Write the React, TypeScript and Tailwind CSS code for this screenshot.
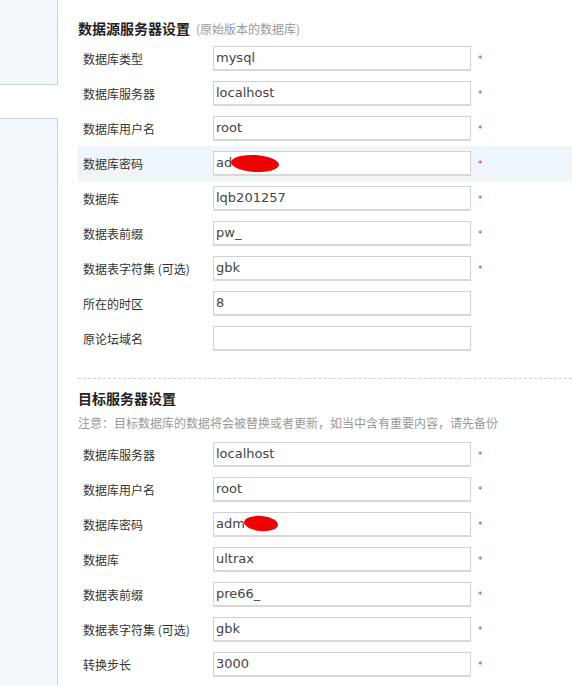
import React from "react";

type Row = {
  label: string;
  value: string;
  required?: boolean;
  hidden?: "short" | "long";
  active?: boolean;
};

const source: Row[] = [
  { label: "数据库类型", value: "mysql", required: true },
  { label: "数据库服务器", value: "localhost", required: true },
  { label: "数据库用户名", value: "root", required: true },
  { label: "数据库密码", value: "ad", required: true, hidden: "long", active: true },
  { label: "数据库", value: "lqb201257", required: true },
  { label: "数据表前缀", value: "pw_", required: true },
  { label: "数据表字符集 (可选)", value: "gbk", required: true },
  { label: "所在的时区", value: "8" },
  { label: "原论坛域名", value: "" },
];

const target: Row[] = [
  { label: "数据库服务器", value: "localhost", required: true },
  { label: "数据库用户名", value: "root", required: true },
  { label: "数据库密码", value: "adm", required: true, hidden: "short" },
  { label: "数据库", value: "ultrax", required: true },
  { label: "数据表前缀", value: "pre66_", required: true },
  { label: "数据表字符集 (可选)", value: "gbk", required: true },
  { label: "转换步长", value: "3000", required: true },
];

const cjk = "font-['SimSun','Noto_Sans_CJK_SC',sans-serif]";

const FieldRow: React.FC<{ row: Row }> = ({ row }) => (
  <div
    className={`flex items-center h-[35px] ${row.active ? "bg-[#eef5fb]" : ""}`}
  >
    <div className={`w-[135px] pl-[5px] text-[12px] text-[#333] ${cjk}`}>
      {row.label}
    </div>
    <div className="relative w-[258px] h-[25px] border border-[#d2d2d2] border-b-2 border-b-[#d8d8d8] bg-white flex items-center pl-[2px] font-['DejaVu_Sans',sans-serif] text-[13px] text-[#444]">
      {row.value}
      {row.hidden === "long" && (
        <span className="absolute left-[17px] top-[3px] w-[48px] h-[17px] rounded-[50%] bg-[#f00000] rotate-[3deg]" />
      )}
      {row.hidden === "short" && (
        <span className="absolute left-[30px] top-[3px] w-[34px] h-[15px] rounded-[50%] bg-[#f00000] rotate-[5deg]" />
      )}
    </div>
    {row.required && (
      <span className="ml-[7px] mt-[2px] text-[9px] text-[#d03050] font-['DejaVu_Sans',sans-serif]">
        *
      </span>
    )}
  </div>
);

export default function App() {
  return (
    <div className="w-[572px] h-[685px] overflow-hidden bg-white flex">
      <div className="w-[58px] shrink-0 flex flex-col">
        <div className="h-[85px] bg-[#f3f8fc] border-r border-b border-[#c6d3dd]" />
        <div className="h-[33px]" />
        <div className="flex-1 bg-[#f3f8fc] border-r border-t border-[#c6d3dd]" />
      </div>

      <div className="flex-1 pl-[20px]">
        <div className="h-[41px] pt-[19px] leading-[18px] flex items-baseline">
          <span className={`text-[14px] font-bold text-[#222] ${cjk}`}>
            数据源服务器设置
          </span>
          <span className={`ml-[6px] text-[12px] text-[#999] ${cjk}`}>
            (原始版本的数据库)
          </span>
        </div>
        {source.map((r) => (
          <FieldRow key={r.label} row={r} />
        ))}

        <div className="mt-[22px] border-t border-dashed border-[#d0d0d0]" />

        <div
          className={`pt-[10px] leading-[18px] text-[14px] font-bold text-[#222] ${cjk}`}
        >
          目标服务器设置
        </div>
        <div
          className={`mt-[7px] leading-[18px] text-[12px] text-[#999] ${cjk}`}
        >
          注意：目标数据库的数据将会被替换或者更新，如当中含有重要内容，请先备份
        </div>
        <div className="mt-[5px]">
          {target.map((r) => (
            <FieldRow key={r.label} row={r} />
          ))}
        </div>
      </div>
    </div>
  );
}
